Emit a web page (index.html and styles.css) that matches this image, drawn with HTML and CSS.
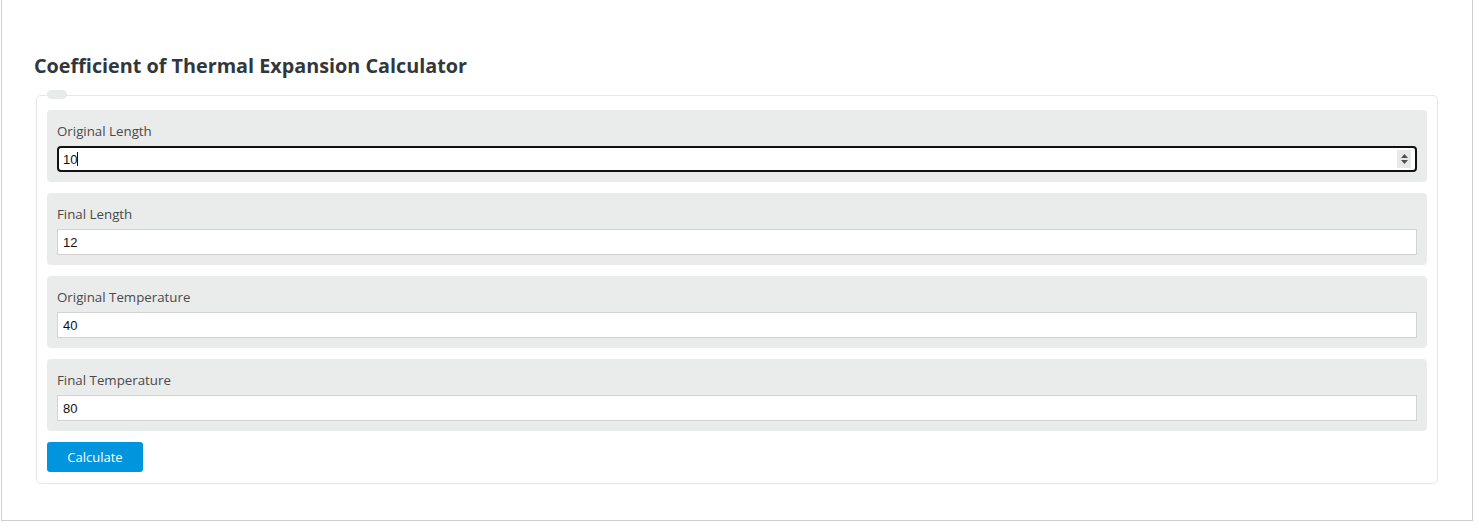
FILE: index.html
```html
<!DOCTYPE html>
<html lang="en">
<head>
<meta charset="utf-8">
<title>Coefficient of Thermal Expansion Calculator</title>
<link rel="stylesheet" href="styles.css">
</head>
<body>
<div class="page">
  <h2 class="title">Coefficient of Thermal Expansion Calculator</h2>
  <div class="calc">
    <span class="legend"></span>
    <div class="group">
      <label class="label" for="ol">Original Length</label>
      <div class="input-wrap">
        <input id="ol" class="input focused" type="text" value="10" readonly>
        <span class="caret"></span>
        <span class="spinner">
          <svg width="9" height="12" viewBox="0 0 9 12"><path d="M4.5 1 L8 5 H1 Z M4.5 11 L8 7 H1 Z" fill="#505050"/></svg>
        </span>
      </div>
    </div>
    <div class="group">
      <label class="label" for="fl">Final Length</label>
      <div class="input-wrap"><input id="fl" class="input" type="text" value="12" readonly></div>
    </div>
    <div class="group">
      <label class="label" for="ot">Original Temperature</label>
      <div class="input-wrap"><input id="ot" class="input" type="text" value="40" readonly></div>
    </div>
    <div class="group">
      <label class="label" for="ft">Final Temperature</label>
      <div class="input-wrap"><input id="ft" class="input" type="text" value="80" readonly></div>
    </div>
    <div class="actions"><button class="btn" type="button">Calculate</button></div>
  </div>
</div>
</body>
</html>
```
FILE: styles.css
```css
html, body {
  margin: 0;
  padding: 0;
  background: #ffffff;
}
body {
  font-family: "Open Sans", "Noto Sans", "Liberation Sans", sans-serif;
  color: #444;
}
.page {
  margin: 0 6px 0 1px;
  height: 521px;
  border: 1px solid #cfcfcf;
  border-top: none;
  padding: 54px 34px 0 32px;
  box-sizing: border-box;
}
.title {
  margin: 0 0 17px 0;
  font-size: 19.8px;
  line-height: 24px;
  font-weight: 700;
  color: #32373c;
}
.calc {
  position: relative;
  margin-left: 2px;
  border: 1px solid #e6e6e6;
  border-radius: 5px;
  padding: 14px 10px 11px 10px;
  display: flex;
  flex-direction: column;
  gap: 11px;
}
.legend {
  position: absolute;
  top: -6px;
  left: 10px;
  width: 20px;
  height: 9px;
  border-radius: 5px;
  background: #e9ebea;
}
.group {
  background: #eaebeb;
  border-radius: 4px;
  padding: 10px;
}
.label {
  display: block;
  font-size: 13.3px;
  line-height: 22px;
  margin-bottom: 4px;
  color: #4a4a4a;
}
.input-wrap {
  position: relative;
}
.input {
  display: block;
  width: 100%;
  height: 26px;
  box-sizing: border-box;
  border: 1px solid #d3d3d3;
  background: #fff;
  padding: 0 5px;
  font-family: "Liberation Sans", Arial, sans-serif;
  font-size: 13px;
  color: #111;
  outline: none;
}
.input.focused {
  border: 2px solid #111;
  border-radius: 4px;
  padding: 0 4px;
}
.caret {
  position: absolute;
  left: 20px;
  top: 6px;
  width: 1px;
  height: 14px;
  background: #111;
}
.spinner {
  position: absolute;
  right: 6px;
  top: 4px;
  width: 14px;
  height: 18px;
  background: #e9e9e9;
  display: flex;
  align-items: center;
  justify-content: center;
}
.spinner svg {
  display: block;
}
.actions {
  display: flex;
}
.btn {
  width: 96px;
  height: 30px;
  border: none;
  border-radius: 3px;
  background: #0095dd;
  color: #fff;
  font-family: "Open Sans", "Noto Sans", sans-serif;
  font-size: 13px;
  padding: 0;
}
```
